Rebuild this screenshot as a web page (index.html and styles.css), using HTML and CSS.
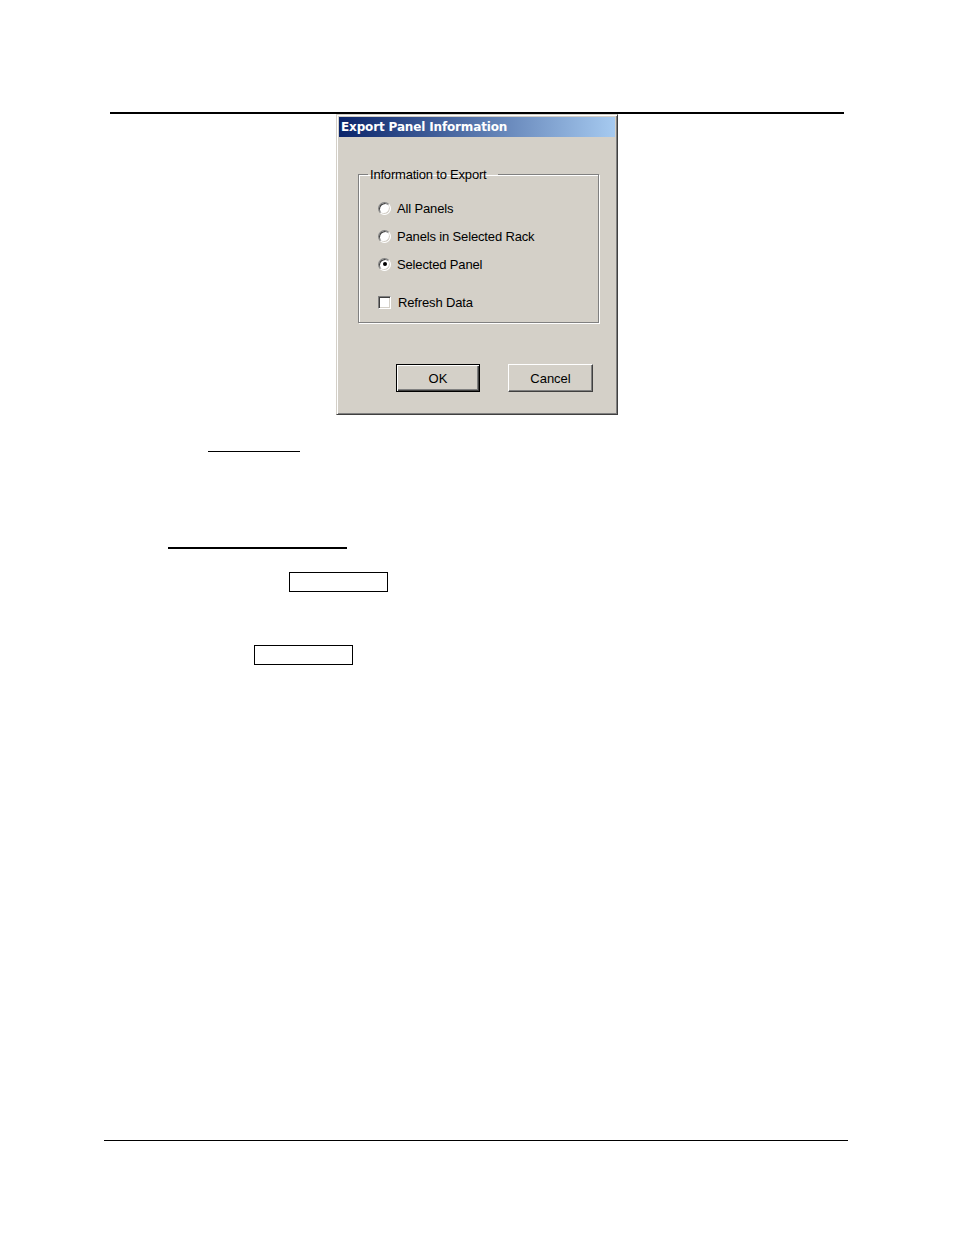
FILE: index.html
```html
<!DOCTYPE html>
<html>
<head>
<meta charset="utf-8">
<link rel="stylesheet" href="styles.css">
</head>
<body>
<div class="page">
  <div class="rule-top"></div>
  <div class="dialog">
    <div class="titlebar">Export Panel Information</div>
    <fieldset class="group">
      <legend class="legend">Information to Export</legend>
      <div class="row"><span class="radio"></span><span class="lbl">All Panels</span></div>
      <div class="row"><span class="radio"></span><span class="lbl">Panels in Selected Rack</span></div>
      <div class="row"><span class="radio checked"></span><span class="lbl">Selected Panel</span></div>
      <div class="row row-check"><span class="check"></span><span class="lbl lbl-check">Refresh Data</span></div>
    </fieldset>
    <div class="buttons">
      <div class="btn btn-default"><span>OK</span></div>
      <div class="btn btn-cancel"><span>Cancel</span></div>
    </div>
  </div>
  <div class="u1"></div>
  <div class="u2"></div>
  <div class="box box1"></div>
  <div class="box box2"></div>
  <div class="rule-bottom"></div>
</div>
</body>
</html>
```

FILE: styles.css
```css
* { box-sizing: border-box; }
html, body { margin: 0; padding: 0; background: #fff; }
.page { padding-top: 112px; font-family: "Liberation Sans", Arial, sans-serif; }

.rule-top { margin-left: 110px; width: 734px; height: 2px; background: #000; }

.dialog {
  margin-left: 336px;
  width: 282px;
  height: 301px;
  background: #d4d0c8;
  border: 1px solid;
  border-color: #d4d0c8 #404040 #404040 #d4d0c8;
  box-shadow: inset 1px 1px 0 #fff, inset -1px -1px 0 #808080;
  padding: 2px;
}
.titlebar {
  height: 20px;
  line-height: 20px;
  padding-left: 2px;
  background: linear-gradient(to right, #0a246a, #a6caf0);
  color: #fff;
  font-family: "DejaVu Sans", Verdana, sans-serif;
  font-weight: bold;
  font-size: 12px;
  letter-spacing: -0.15px;
}

.group {
  margin: 29px 0 0 19px;
  width: 241px;
  min-width: 0;
  padding: 13px 10px 6px 19px;
  border: 1px solid #808080;
  box-shadow: inset 1px 1px 0 #fff, 1px 1px 0 #fff;
  font-size: 13px;
  color: #000;
}
.legend {
  margin-left: -10px;
  padding: 2px 12px 0 2px;
  line-height: 14px;
  height: 16px;
  font-size: 13px;
  letter-spacing: -0.2px;
}
.row {
  display: flex;
  align-items: center;
  height: 28px;
}
.row:first-of-type { margin-top: -1px; }
.row-check { margin-top: 10px; }
.lbl { margin-left: 6px; letter-spacing: -0.15px; white-space: nowrap; }
.lbl-check { margin-left: 7px; }

.radio {
  position: relative;
  width: 13px;
  height: 13px;
  border-radius: 50%;
  background: #fff;
  border: 1px solid;
  border-color: #808080 #fff #fff #808080;
  box-shadow: inset 1px 1px 0 #404040, inset -1px -1px 0 #d4d0c8;
  flex: none;
}
.radio.checked::after {
  content: "";
  position: absolute;
  left: 3.5px;
  top: 3.5px;
  width: 4px;
  height: 4px;
  border-radius: 50%;
  background: #000;
}
.check {
  width: 13px;
  height: 13px;
  background: #fff;
  border: 1px solid;
  border-color: #808080 #fff #fff #808080;
  box-shadow: inset 1px 1px 0 #404040, inset -1px -1px 0 #d4d0c8;
  flex: none;
}

.buttons {
  display: flex;
  gap: 28px;
  margin-top: 41px;
  padding-left: 57px;
}
.btn {
  height: 28px;
  display: flex;
  align-items: center;
  justify-content: center;
  font-size: 13px;
  background: #d4d0c8;
  border: 1px solid;
  border-color: #fff #404040 #404040 #fff;
  box-shadow: inset -1px -1px 0 #808080;
}
.btn-default {
  width: 84px;
  border: 1px solid #000;
  box-shadow: inset 1px 1px 0 #fff, inset -1px -1px 0 #404040, inset -2px -2px 0 #808080;
}
.btn-cancel { width: 85px; }

.u1 { margin: 36px 0 0 208px; width: 92px; height: 1px; background: #000; }
.u2 { margin: 95px 0 0 168px; width: 179px; height: 2px; background: #000; }
.box { width: 99px; height: 20px; border: 1px solid #000; }
.box1 { margin: 23px 0 0 289px; }
.box2 { margin: 53px 0 0 254px; }
.rule-bottom { margin: 475px 0 0 104px; width: 744px; height: 1px; background: #000; }
```
